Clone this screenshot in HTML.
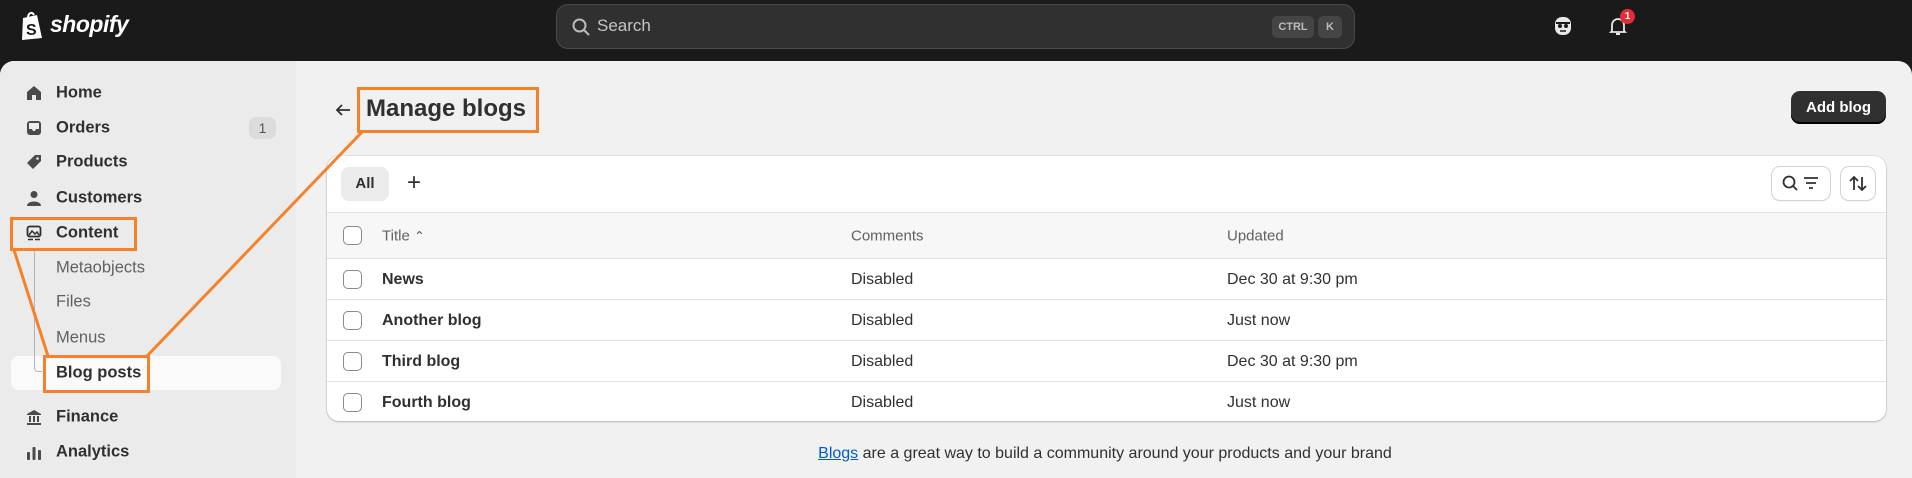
<!DOCTYPE html>
<html><head><meta charset="utf-8"><style>
*{box-sizing:border-box;margin:0;padding:0}
body{width:1912px;height:478px;overflow:hidden;background:#1a1a1a;font-family:"Liberation Sans",sans-serif;position:relative;color:#303030}
.abs{position:absolute}
.top{left:0;top:0;width:1912px;height:61px;background:#1a1a1a}
.search{left:556px;top:4px;width:799px;height:45px;background:#303030;border:1px solid #4a4a4a;border-radius:12px}
.kbd{top:11px;height:22px;background:#454545;border-radius:5px;color:#bbb;font-size:11px;font-weight:bold;line-height:22px;text-align:center}
.main{left:0;top:61px;width:1912px;height:417px;background:#f1f1f1;border-radius:14px 14px 0 0;overflow:hidden}
.side{left:0;top:0;width:296px;height:417px;background:#ebebeb}
.nav{position:absolute;left:56px;font-size:16.5px;font-weight:bold;color:#303030;transform:translateY(-50%)}
.sub{font-weight:normal;color:#616161}
.ic{position:absolute;left:26px;width:16px;height:16px;transform:translateY(-50%)}
.ob{position:absolute;border:3px solid #f5822a}
.card{left:327px;top:95px;width:1559px;height:265px;background:#fff;border-radius:12px;box-shadow:0 1px 2px rgba(0,0,0,.2),0 0 0 1px #e3e3e3;overflow:hidden}
.row{position:absolute;left:0;width:1559px;border-top:1px solid #e3e3e3;font-size:16px}
.cb{position:absolute;left:16px;width:19px;height:19px;border:1.5px solid #8a8a8a;border-radius:5px;background:#fff}
.c{position:absolute;transform:translateY(-50%)}
</style></head><body>
<div class="abs top">
  <svg class="abs" style="left:20px;top:10px" width="26" height="32" viewBox="0 0 26 32"><path d="M3 8 L17 5 L22 28 L2 30 Z" fill="#fff"/><path d="M8 8 C8 3 12 1 14 5" stroke="#fff" stroke-width="2" fill="none"/><text x="6" y="25" font-size="16" font-weight="bold" fill="#1a1a1a" font-family="Liberation Sans">S</text></svg>
  <div class="abs" style="left:50px;top:11px;color:#fff;font-size:23px;font-weight:bold;font-style:italic;letter-spacing:-0.5px">shopify</div>
  <div class="abs search">
    <svg class="abs" style="left:14px;top:12px" width="20" height="20" viewBox="0 0 20 20"><circle cx="8.5" cy="8.5" r="6" stroke="#bbb" stroke-width="2" fill="none"/><path d="M13 13l5 5" stroke="#bbb" stroke-width="2"/></svg>
    <div class="abs" style="left:40px;top:11px;color:#c4c4c4;font-size:17px">Search</div>
    <div class="abs kbd" style="left:715px;width:42px">CTRL</div>
    <div class="abs kbd" style="left:761px;width:24px">K</div>
  </div>
  <svg class="abs" style="left:1553px;top:15px" width="20" height="22" viewBox="0 0 20 22"><rect x="2" y="2" width="16" height="18" rx="7" fill="#e8e8e8"/><path d="M3 8h14" stroke="#1a1a1a" stroke-width="2"/><circle cx="7" cy="11" r="2" fill="#1a1a1a"/><circle cx="13" cy="11" r="2" fill="#1a1a1a"/><path d="M7 16h6" stroke="#1a1a1a" stroke-width="1.5"/></svg>
  <svg class="abs" style="left:1608px;top:15px" width="20" height="22" viewBox="0 0 20 22"><path d="M4 16 V10 A6 6 0 0 1 16 10 V16 L17 17 H3 Z" stroke="#e8e8e8" stroke-width="1.8" fill="none"/><path d="M8 19h4" stroke="#e8e8e8" stroke-width="2"/></svg>
  <div class="abs" style="left:1620px;top:9px;width:15px;height:15px;border-radius:50%;background:#e22c38;color:#fff;font-size:10px;font-weight:bold;text-align:center;line-height:15px">1</div>
</div>
<div class="abs main">
  <div class="abs side">
    <div class="abs" style="left:11px;top:295px;width:270px;height:34px;background:#fafafa;border-radius:8px"></div>
    <div class="abs" style="left:34px;top:190px;width:8px;height:121px;border-left:1.5px solid #b5b5b5;border-bottom:1.5px solid #b5b5b5;border-radius:0 0 0 4px"></div>
    <svg class="ic" style="top:32px" viewBox="0 0 16 16"><path d="M1 7 L8 1 L15 7 V15 H10 V10 H6 V15 H1Z" fill="#4a4a4a"/></svg>
    <div class="nav" style="top:32px">Home</div>
    <svg class="ic" style="top:67px" viewBox="0 0 16 16"><rect x="1" y="1" width="14" height="14" rx="3" fill="#4a4a4a"/><path d="M3 3h10v6h-3l-1 2H7L6 9H3z" fill="#ebebeb"/></svg>
    <div class="nav" style="top:67px">Orders</div>
    <div class="abs" style="left:249px;top:56px;width:27px;height:22px;background:#dcdcdc;border-radius:7px;font-size:14px;text-align:center;line-height:22px;color:#555">1</div>
    <svg class="ic" style="top:101px" viewBox="0 0 16 16"><path d="M9 1 H15 V7 L7 15 L1 9 Z" fill="#4a4a4a"/><circle cx="11.5" cy="4.5" r="1.3" fill="#ebebeb"/></svg>
    <div class="nav" style="top:101px">Products</div>
    <svg class="ic" style="top:137px" viewBox="0 0 16 16"><circle cx="8" cy="4.5" r="3.5" fill="#4a4a4a"/><path d="M1 16 C1 10 15 10 15 16Z" fill="#4a4a4a"/></svg>
    <div class="nav" style="top:137px">Customers</div>
    <svg class="ic" style="top:172px" viewBox="0 0 16 16"><rect x="1.5" y="1.5" width="13" height="10" rx="2" stroke="#303030" stroke-width="1.8" fill="none"/><path d="M3 10 L6 6 L9 9 L11 7 L13 10" stroke="#303030" stroke-width="1.5" fill="none"/><path d="M2 14.5h5M9 14.5h5" stroke="#303030" stroke-width="1.6"/></svg>
    <div class="nav" style="top:172px">Content</div>
    <div class="nav sub" style="top:207px">Metaobjects</div>
    <div class="nav sub" style="top:241px">Files</div>
    <div class="nav sub" style="top:277px">Menus</div>
    <div class="nav" style="top:312px">Blog posts</div>
    <svg class="ic" style="top:356px" viewBox="0 0 16 16"><path d="M1 5 L8 1 L15 5 V6 H1Z M1 14h14v2H1z M3 7h2v6H3z M7 7h2v6H7z M11 7h2v6h-2z" fill="#4a4a4a"/></svg>
    <div class="nav" style="top:356px">Finance</div>
    <svg class="ic" style="top:391px" viewBox="0 0 16 16"><rect x="1" y="8" width="3" height="8" rx="1" fill="#4a4a4a"/><rect x="6.5" y="3" width="3" height="13" rx="1" fill="#4a4a4a"/><rect x="12" y="6" width="3" height="10" rx="1" fill="#4a4a4a"/></svg>
    <div class="nav" style="top:391px">Analytics</div>
  </div>
  <svg class="abs" style="left:334px;top:40px" width="18" height="18" viewBox="0 0 18 18"><path d="M16 9H3M8 4L3 9l5 5" stroke="#303030" stroke-width="1.8" fill="none"/></svg>
  <div class="abs" style="left:366px;top:34px;font-size:24px;font-weight:bold;color:#303030">Manage blogs</div>
  <div class="abs" style="left:1791px;top:30px;width:95px;height:33px;background:#303030;border-radius:9px;color:#fff;font-size:15px;font-weight:bold;text-align:center;line-height:33px;box-shadow:inset 0 -2px 0 #000">Add blog</div>
  <div class="abs card">
    <div class="abs" style="left:14px;top:11px;width:48px;height:34px;background:#ebebeb;border-radius:8px;font-size:15px;font-weight:bold;text-align:center;line-height:34px">All</div>
    <div class="abs" style="left:80px;top:13px;font-size:24px;color:#303030">+</div>
    <div class="abs" style="left:1445px;top:11px;width:58px;height:33px;border-radius:8px;box-shadow:0 0 0 1px #d4d4d4,0 1px 1px rgba(0,0,0,.2)"><svg width="58" height="33" viewBox="0 0 58 33"><circle cx="17" cy="15" r="5.5" stroke="#303030" stroke-width="1.8" fill="none"/><path d="M21 19l4 4" stroke="#303030" stroke-width="1.8"/><path d="M32 11h14M34 16h10M37 21h4" stroke="#303030" stroke-width="1.8"/></svg></div>
    <div class="abs" style="left:1514px;top:11px;width:34px;height:33px;border-radius:8px;box-shadow:0 0 0 1px #d4d4d4,0 1px 1px rgba(0,0,0,.2)"><svg width="34" height="33" viewBox="0 0 34 33"><path d="M13 23V10M9 14l4-4 4 4M21 10v13M17 19l4 4 4-4" stroke="#303030" stroke-width="1.8" fill="none"/></svg></div>
    <div class="row" style="top:56px;height:46px;background:#f7f7f7;font-size:15px;color:#616161">
      <div class="cb" style="top:13px"></div>
      <div class="c" style="left:55px;top:23px">Title <span style="font-size:13px;color:#555">⌃</span></div>
      <div class="c" style="left:524px;top:23px">Comments</div>
      <div class="c" style="left:900px;top:23px">Updated</div>
    </div>
    <div class="row" style="top:102px;height:41px"><div class="cb" style="top:11px"></div><div class="c" style="left:55px;top:21px;font-weight:bold">News</div><div class="c" style="left:524px;top:21px">Disabled</div><div class="c" style="left:900px;top:21px">Dec 30 at 9:30 pm</div></div>
    <div class="row" style="top:143px;height:41px;background:#fff"><div class="cb" style="top:11px"></div><div class="c" style="left:55px;top:21px;font-weight:bold">Another blog</div><div class="c" style="left:524px;top:21px">Disabled</div><div class="c" style="left:900px;top:21px">Just now</div></div>
    <div class="row" style="top:184px;height:41px"><div class="cb" style="top:11px"></div><div class="c" style="left:55px;top:21px;font-weight:bold">Third blog</div><div class="c" style="left:524px;top:21px">Disabled</div><div class="c" style="left:900px;top:21px">Dec 30 at 9:30 pm</div></div>
    <div class="row" style="top:225px;height:40px"><div class="cb" style="top:11px"></div><div class="c" style="left:55px;top:21px;font-weight:bold">Fourth blog</div><div class="c" style="left:524px;top:21px">Disabled</div><div class="c" style="left:900px;top:21px">Just now</div></div>
  </div>
  <div class="abs" style="left:0;width:2210px;top:384px;text-align:center;font-size:16px;color:#303030"><span style="color:#005bd3;text-decoration:underline">Blogs</span> are a great way to build a community around your products and your brand</div>
  <div class="ob" style="left:10px;top:156px;width:127px;height:34px"></div>
  <div class="ob" style="left:43px;top:294px;width:107px;height:38px;background:transparent"></div>
  <div class="ob" style="left:357px;top:26px;width:182px;height:46px"></div>
  <svg class="abs" style="left:0;top:0" width="600" height="417"><path d="M14 189 L48 295 M362 71 L147 295" stroke="#f5822a" stroke-width="3" fill="none"/></svg>
</div>
</body></html>
